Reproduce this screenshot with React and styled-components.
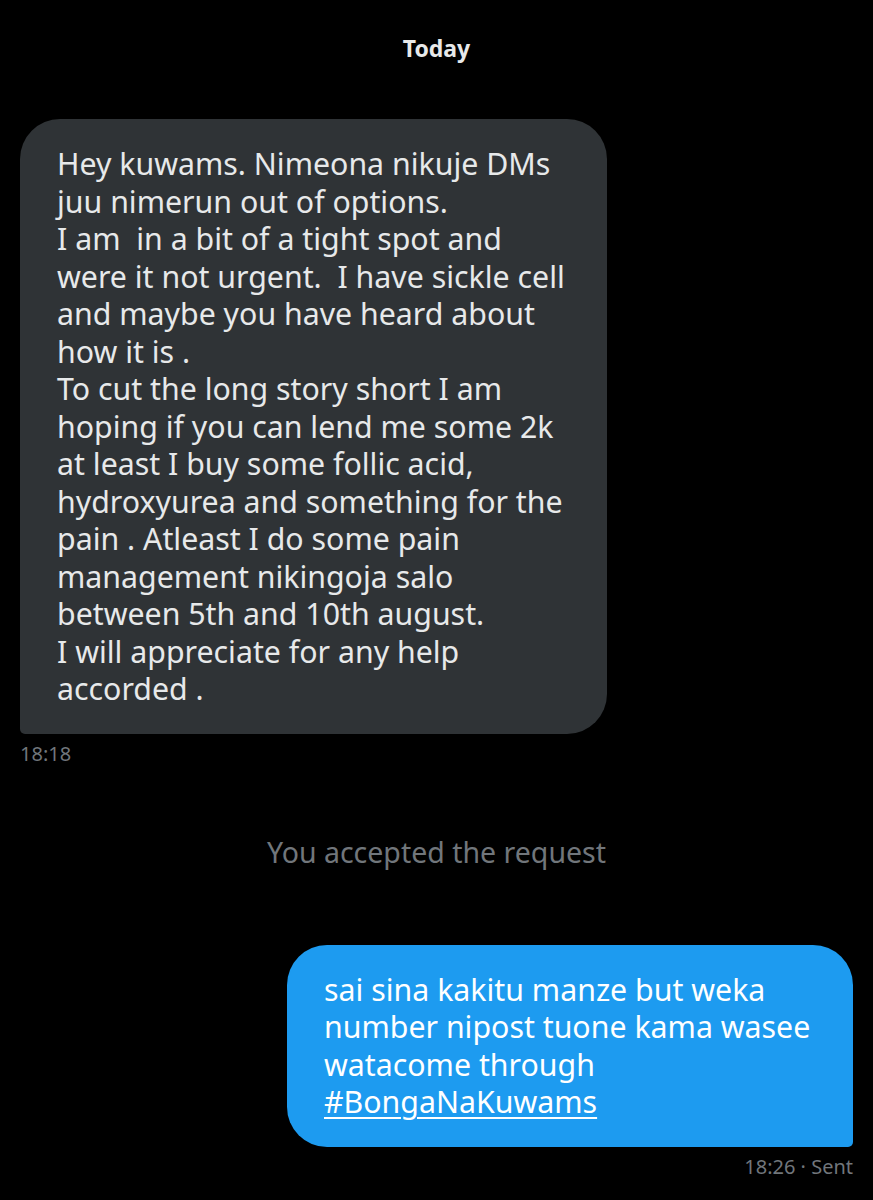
import React from 'react'
import styled, { createGlobalStyle } from 'styled-components'

const GlobalStyle = createGlobalStyle`
  html, body {
    margin: 0;
    padding: 0;
    background: #000;
  }
  body {
    font-family: "Noto Sans", "Open Sans", sans-serif;
    -webkit-font-smoothing: antialiased;
  }
`

const received = [
  'Hey kuwams. Nimeona nikuje DMs',
  'juu nimerun out of options.',
  'I am  in a bit of a tight spot and',
  'were it not urgent.  I have sickle cell',
  'and maybe you have heard about',
  'how it is .',
  'To cut the long story short I am',
  'hoping if you can lend me some 2k',
  'at least I buy some follic acid,',
  'hydroxyurea and something for the',
  'pain . Atleast I do some pain',
  'management nikingoja salo',
  'between 5th and 10th august.',
  'I will appreciate for any help',
  'accorded .',
]

const sent = [
  'sai sina kakitu manze but weka',
  'number nipost tuone kama wasee',
  'watacome through',
]

const App = () => {
  return (
    <>
      <GlobalStyle />
      <Thread>
        <DayLabel>Today</DayLabel>

        <Group side="left">
          <Bubble mine={false} width={587}>
            {received.map((line, i) => (
              <Line key={i}>{line}</Line>
            ))}
          </Bubble>
          <Meta>18:18</Meta>
        </Group>

        <Notice>You accepted the request</Notice>

        <Group side="right">
          <Bubble mine width={566}>
            {sent.map((line, i) => (
              <Line key={i}>{line}</Line>
            ))}
            <Line>
              <Tag href="#">#BongaNaKuwams</Tag>
            </Line>
          </Bubble>
          <Meta>18:26 · Sent</Meta>
        </Group>
      </Thread>
    </>
  )
}

const Thread = styled.main`
  width: 873px;
  height: 1200px;
  box-sizing: border-box;
  padding: 33px 20px 0;
  display: flex;
  flex-direction: column;
  overflow: hidden;
`

const DayLabel = styled.div`
  text-align: center;
  color: #e7e9ea;
  font-size: 23px;
  font-weight: 700;
  line-height: 30px;
  margin-bottom: 56px;
`

const Group = styled.div`
  display: flex;
  flex-direction: column;
  align-items: ${(p) => (p.side === 'right' ? 'flex-end' : 'flex-start')};
`

const Bubble = styled.div`
  width: ${(p) => p.width}px;
  box-sizing: border-box;
  padding: 26px 30px 26px 37px;
  background: ${(p) => (p.mine ? '#1d9bf0' : '#2f3336')};
  color: ${(p) => (p.mine ? '#ffffff' : '#e7e9ea')};
  border-radius: ${(p) => (p.mine ? '40px 40px 5px 40px' : '40px 40px 40px 5px')};
  font-size: 30.3px;
  line-height: 37.5px;
`

const Line = styled.div`
  white-space: pre;
`

const Tag = styled.a`
  color: #ffffff;
  text-decoration: underline;
  text-decoration-thickness: 2px;
  text-underline-offset: 4px;
`

const Meta = styled.div`
  margin-top: 8px;
  color: #71767b;
  font-size: 20px;
  line-height: 24px;
`

const Notice = styled.div`
  margin: 68px 0 75px;
  text-align: center;
  color: #71767b;
  font-size: 28.5px;
  line-height: 36px;
`

export default App
